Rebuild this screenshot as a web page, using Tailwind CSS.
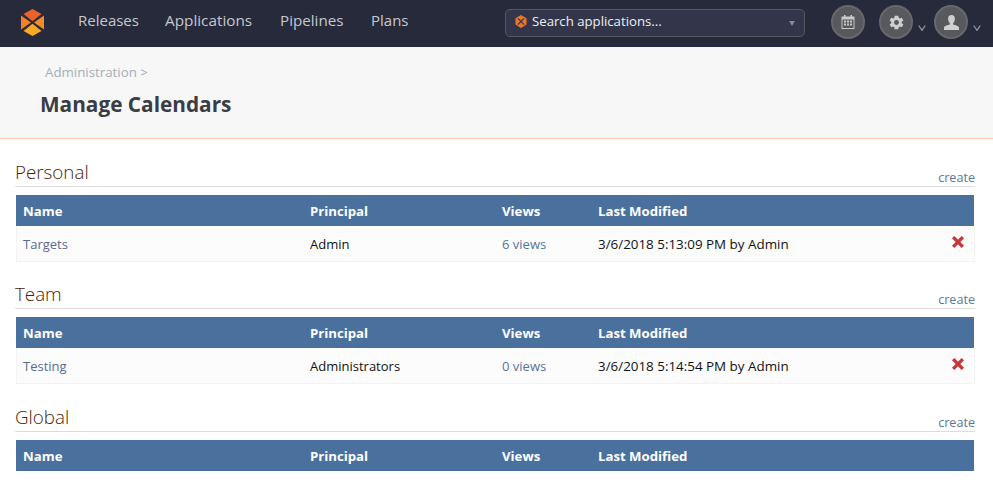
<!DOCTYPE html>
<html>
<head>
<meta charset="utf-8">
<script src="https://cdn.jsdelivr.net/npm/@tailwindcss/browser@4"></script>
</head>
<body class="bg-white font-['Open_Sans',sans-serif] overflow-hidden h-[482px]">
<nav class="h-[47px] bg-[#272a3b] flex items-center relative">
  <svg class="ml-[20px] w-[25px] h-[27px] mb-[3px]" viewBox="0 0 25 27">
    <polygon points="12.5,0 21.5,5 12.5,12.300 3.500,5" fill="#e8622a"/>
    <polygon points="1,6.500 11,13.500 1,20.500" fill="#f58025"/>
    <polygon points="24,6.500 14,13.500 24,20.500" fill="#f58c25"/>
    <polygon points="12.5,14.700 21.500,22 12.5,27 3.500,22" fill="#fba922"/>
  </svg>
  <div class="grid grid-cols-[87px_115px_91px_37px] ml-[33px] text-[15px] text-[#c5c7cd] mb-[7px] whitespace-nowrap">
    <a>Releases</a><a class="text-[15.3px]">Applications</a><a class="text-[15.2px]">Pipelines</a><a>Plans</a>
  </div>
  <div class="ml-[97px] w-[300px] h-[28px] mb-[1px] rounded-[5px] border border-[#56585f] bg-[#33364a] flex items-center pl-[9px] pr-[9px] text-[13.2px] text-[#eceef2]">
    <svg class="w-[12px] h-[13px] mb-[4px] mr-[5px]" viewBox="0 0 25 27">
      <polygon points="12.5,0 24,6.5 24,20 12.5,27 1,20 1,6.5" fill="#ee7426"/>
      <path d="M6 7L19 20M19 7L6 20" stroke="#33364a" stroke-width="2.500"/>
    </svg>
    <span class="mb-[2px]">Search applications...</span>
    <span class="ml-auto w-0 h-0 border-x-[3.5px] border-x-transparent border-t-[5px] border-t-[#85878f]"></span>
  </div>
  <div class="ml-[26px] flex items-center mb-[3px]">
    <span class="w-[34px] h-[34px] rounded-full bg-[#58595d] border-2 border-[#67686c] flex items-center justify-center">
      <svg class="w-[14px] h-[14px]" viewBox="0 0 14 14"><path fill-rule="evenodd" fill="#c9c9c9" d="M3 0h1.5v1.5h5V0H11v1.5h2.5V14H.5V1.5H3zM1.5 4.5v8.5h11V4.5zM3 5.5h2v2H3zM6 5.5h2v2H6zM9 5.5h2v2H9zM3 8.5h2v2H3zM6 8.5h2v2H6zM9 8.5h2v2H9z"/></svg>
    </span>
    <span class="ml-[14px] w-[34px] h-[34px] rounded-full bg-[#58595d] border-2 border-[#67686c] flex items-center justify-center">
      <svg class="w-[17px] h-[17px]" viewBox="0 0 24 24"><path fill="#cfcfcf" d="M19.4 13a7.8 7.8 0 0 0 0-2l2.3-1.8-2.3-4-2.7 1.1a7.6 7.6 0 0 0-1.7-1L14.6 2.5h-5.2L9 5.3a7.6 7.6 0 0 0-1.7 1L4.6 5.2l-2.3 4L4.6 11a7.8 7.8 0 0 0 0 2l-2.3 1.8 2.3 4 2.7-1.1a7.6 7.6 0 0 0 1.7 1l.4 2.8h5.2l.4-2.8a7.6 7.6 0 0 0 1.7-1l2.7 1.1 2.3-4zM12 15.5a3.5 3.5 0 1 1 0-7 3.5 3.5 0 0 1 0 7z"/></svg>
    </span>
    <svg class="ml-[5px] mt-[11px] w-[8px] h-[6px]" viewBox="0 0 8 6"><path d="M.7.5 4 5.3 7.3.5" fill="none" stroke="#9a9ba1" stroke-width="1.2"/></svg>
    <span class="ml-[8px] w-[34px] h-[34px] rounded-full bg-[#58595d] border-2 border-[#67686c] flex items-center justify-center">
      <svg class="w-[15px] h-[15px]" viewBox="0 0 14 14"><path fill="#cfcfcf" d="M7 0c2 0 3.2 1.5 3.2 3.6 0 1.6-.7 3.1-1.6 3.900v1.300c1.600.6 5.400 1.400 5.400 3V14H0v-2.200c0-1.600 3.800-2.400 5.400-3V7.500C4.500 6.700 3.800 5.200 3.800 3.600 3.800 1.500 5 0 7 0z"/></svg>
    </span>
    <svg class="ml-[5px] mt-[11px] w-[8px] h-[6px]" viewBox="0 0 8 6"><path d="M.7.5 4 5.3 7.3.500" fill="none" stroke="#9a9ba1" stroke-width="1.2"/></svg>
  </div>
</nav>
<header class="h-[92px] bg-[#f7f7f7] border-b border-[#fcc9b0] pl-[40px] pt-[16px]">
  <div class="pl-[5px] text-[13.3px] leading-[18px] text-[#a3afb8]">Administration &gt;</div>
  <h1 class="mt-[9px] text-[20.8px] leading-[29px] font-bold text-[#3a3d44]">Manage Calendars</h1>
</header>
<main class="px-[15px]">
  <section class="pt-[21px] h-[122px]">
    <div class="flex items-end justify-between border-b border-[#dcdcdc] h-[27px] w-[960px]">
      <h2 class="text-[18.8px] leading-[25px] mb-[1px] font-light text-[#4a2208]">Personal</h2>
      <a class="text-[12.6px] leading-[16px] text-[#5b7896]">create</a>
    </div>
    <div class="mt-[8px] ml-px w-[958px] h-[31px] bg-[#4a719e] text-white text-[13.2px] font-bold grid grid-cols-[287px_192px_96px_1fr] items-center pl-[7px] pt-[2px]">
      <span>Name</span><span>Principal</span><span>Views</span><span>Last Modified</span>
    </div>
    <div class="ml-px w-[959px] h-[36px] bg-[#fcfcfc] border-b border-r border-l border-[#f3f3f3] text-[13px] text-[#111] grid grid-cols-[287px_192px_96px_1fr_auto] items-center pl-[6px] pr-[9px] pt-[2px]">
      <a class="text-[#5a6a94]">Targets</a><span>Admin</span><a class="text-[#54749a]">6 views</a><span class="text-[13.4px]">3/6/2018 5:13:09 PM by Admin</span>
      <svg class="w-[14px] h-[14px] mb-[6px]" viewBox="0 0 13 13"><path d="M2 2l9 9M11 2l-9 9" stroke="#c8353c" stroke-width="3.200"/></svg>
    </div>
  </section>
  <section class="pt-[21px] h-[123px]">
    <div class="flex items-end justify-between border-b border-[#dcdcdc] h-[27px] w-[960px]">
      <h2 class="text-[18.8px] leading-[25px] mb-[1px] font-light text-[#4a2208]">Team</h2>
      <a class="text-[12.6px] leading-[16px] text-[#5b7896]">create</a>
    </div>
    <div class="mt-[8px] ml-px w-[958px] h-[31px] bg-[#4a719e] text-white text-[13.2px] font-bold grid grid-cols-[287px_192px_96px_1fr] items-center pl-[7px] pt-[2px]">
      <span>Name</span><span>Principal</span><span>Views</span><span>Last Modified</span>
    </div>
    <div class="ml-px w-[959px] h-[36px] bg-[#fcfcfc] border-b border-r border-l border-[#f3f3f3] text-[13px] text-[#111] grid grid-cols-[287px_192px_96px_1fr_auto] items-center pl-[6px] pr-[9px] pt-[2px]">
      <a class="text-[#5a6a94]">Testing</a><span>Administrators</span><a class="text-[#54749a]">0 views</a><span class="text-[13.4px]">3/6/2018 5:14:54 PM by Admin</span>
      <svg class="w-[14px] h-[14px] mb-[6px]" viewBox="0 0 13 13"><path d="M2 2l9 9M11 2l-9 9" stroke="#c8353c" stroke-width="3.200"/></svg>
    </div>
  </section>
  <section class="pt-[21px]">
    <div class="flex items-end justify-between border-b border-[#dcdcdc] h-[27px] w-[960px]">
      <h2 class="text-[18.8px] leading-[25px] mb-[1px] font-light text-[#4a2208]">Global</h2>
      <a class="text-[12.6px] leading-[16px] text-[#5b7896]">create</a>
    </div>
    <div class="mt-[8px] ml-px w-[958px] h-[31px] bg-[#4a719e] text-white text-[13.2px] font-bold grid grid-cols-[287px_192px_96px_1fr] items-center pl-[7px] pt-[2px]">
      <span>Name</span><span>Principal</span><span>Views</span><span>Last Modified</span>
    </div>
  </section>
</main>
</body>
</html>
